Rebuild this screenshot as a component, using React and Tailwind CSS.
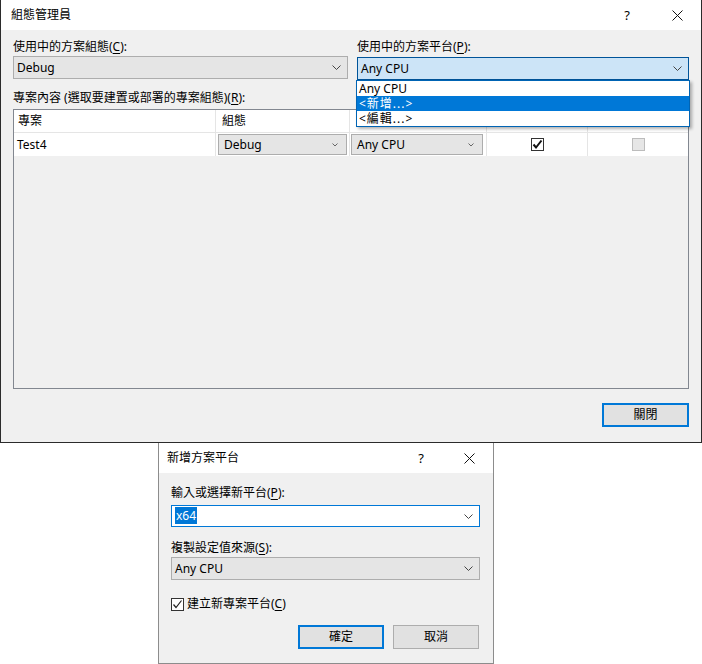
import React from 'react';

const font = "font-['Noto_Sans','Noto_Sans_CJK_TC',sans-serif]";

const Chevron = ({ className = '' }) => (
  <svg width="9" height="5" viewBox="0 0 9 5" className={className}>
    <polyline points="0.5,0.5 4.5,4.5 8.5,0.5" fill="none" stroke="#444" strokeWidth="1" />
  </svg>
);

const SmallChevron = () => (
  <svg width="6" height="4" viewBox="0 0 6 4">
    <polyline points="0.5,0.5 3,3 5.5,0.5" fill="none" stroke="#666" strokeWidth="1" />
  </svg>
);

const CloseX = () => (
  <svg width="11" height="11" viewBox="0 0 11 11">
    <path d="M0.5 0.5 L10.5 10.5 M10.5 0.5 L0.5 10.5" stroke="#111" strokeWidth="1" />
  </svg>
);

const Check = ({ bold }) => (
  <svg width="11" height="11" viewBox="0 0 11 11">
    <polyline
      points="1.5,5.5 4,8.5 9.5,1.5"
      fill="none"
      stroke={bold ? '#111' : '#222'}
      strokeWidth={bold ? '2' : '1.2'}
    />
  </svg>
);

const Key = ({ children }) => <span className="underline underline-offset-2">{children}</span>;

const TitleBar = ({ title, h, pl, qx, xx }) => (
  <div className={`${h} bg-white flex items-center ${pl} text-[12px] text-black`}>
    <span className="flex-1">{title}</span>
    <span className={`${qx} text-[13px]`}>?</span>
    <span className={`${xx} flex items-center`}>
      <CloseX />
    </span>
  </div>
);

const GrayCombo = ({ text, className = '' }) => (
  <div className={`h-[23px] bg-[#e5e5e5] border border-[#adadad] flex items-center pl-[3px] pr-[6px] ${className}`}>
    <span className="flex-1">{text}</span>
    <Chevron />
  </div>
);

export default function App() {
  return (
    <div className={`${font} text-[12px] leading-[16px] text-black bg-white w-[702px] h-[664px]`}>
      {/* 組態管理員 */}
      <div className="relative w-[702px] h-[443px] border-l border-r border-b border-[#2b2b2b] flex flex-col">
        <TitleBar title="組態管理員" h="h-[30px]" pl="pl-[10px]" qx="mr-[42px]" xx="mr-[18px]" />
        <div className="flex-1 bg-[#f0f0f0] pl-[12px] pr-[12px] pt-[9px] flex flex-col">
          <div className="flex gap-[9px]">
            <div className="w-[335px]">
              <div>使用中的方案組態(<Key>C</Key>):</div>
              <GrayCombo text="Debug" className="mt-[1px]" />
            </div>
            <div className="flex-1">
              <div>使用中的方案平台(<Key>P</Key>):</div>
              <div className="mt-[2px] h-[23px] bg-[#cce4f7] border border-[#005499] flex items-center pl-[3px] pr-[6px]">
                <span className="flex-1">Any CPU</span>
                <Chevron />
              </div>
            </div>
          </div>

          <div className="mt-[10px]">專案內容 (選取要建置或部署的專案組態)(<Key>R</Key>):</div>

          <div className="mt-[3px] h-[280px] border border-[#828790] bg-[#f0f0f0] flex flex-col">
            <div className="h-[23px] flex bg-white border-b border-[#e5e5e5]">
              <div className="w-[202px] border-r border-[#e5e5e5] pl-[4px] flex items-center">專案</div>
              <div className="w-[134px] border-r border-[#e5e5e5] pl-[6px] flex items-center">組態</div>
              <div className="w-[137px] border-r border-[#e5e5e5]" />
              <div className="w-[101px] border-r border-[#e5e5e5]" />
              <div className="flex-1" />
            </div>
            <div className="h-[23px] flex">
              <div className="w-[202px] bg-white border-r border-[#e5e5e5] pl-[3px] flex items-center">Test4</div>
              <div className="w-[134px] bg-white border-r border-[#e5e5e5] flex items-center px-[2px]">
                <div className="w-full h-[21px] bg-[#e5e5e5] border border-[#adadad] flex items-center pl-[5px] pr-[8px]">
                  <span className="flex-1">Debug</span>
                  <SmallChevron />
                </div>
              </div>
              <div className="w-[137px] bg-white border-r border-[#e5e5e5] flex items-center pl-[1px] pr-[3px]">
                <div className="w-full h-[21px] bg-[#e5e5e5] border border-[#adadad] flex items-center pl-[5px] pr-[8px]">
                  <span className="flex-1">Any CPU</span>
                  <SmallChevron />
                </div>
              </div>
              <div className="w-[101px] bg-white border-r border-[#e5e5e5] flex items-center justify-center">
                <div className="w-[13px] h-[13px] border border-[#333] bg-white flex items-center justify-center">
                  <Check bold />
                </div>
              </div>
              <div className="flex-1 bg-white flex items-center justify-center">
                <div className="w-[13px] h-[13px] border border-[#bcbcbc] bg-[#e6e6e6]" />
              </div>
            </div>
          </div>

          <div className="flex justify-end mt-[14px]">
            <button className="w-[87px] h-[24px] border-2 border-[#0078d7] bg-[#e1e1e1] text-[12px]">關閉</button>
          </div>
        </div>

        {/* 下拉清單 */}
        <div className="absolute left-[355px] top-[80px] w-[334px] h-[47px] bg-white border border-[#0064b4] shadow-[2px_2px_3px_rgba(0,0,0,0.3)] flex flex-col">
          <div className="h-[15px] leading-[15px] pl-[2px] overflow-hidden">Any CPU</div>
          <div className="h-[15px] leading-[15px] pl-[2px] overflow-hidden bg-[#0078d7] text-white tracking-[1px]">&lt;新增...&gt;</div>
          <div className="h-[15px] leading-[15px] pl-[2px] overflow-hidden tracking-[1px]">&lt;編輯...&gt;</div>
        </div>
      </div>

      {/* 新增方案平台 */}
      <div className="ml-[158px] w-[336px] h-[221px] border-l border-r border-b border-[#8c8c8c] flex flex-col">
        <TitleBar title="新增方案平台" h="h-[30px]" pl="pl-[8px]" qx="mr-[40px]" xx="mr-[18px]" />
        <div className="flex-1 bg-[#f0f0f0] pl-[12px] pr-[13px] pt-[12px] flex flex-col">
          <div>輸入或選擇新平台(<Key>P</Key>):</div>
          <div className="mt-[4px] h-[22px] bg-white border border-[#0078d7] flex items-center pl-[3px] pr-[6px]">
            <span className="flex-1">
              <span className="bg-[#0078d7] text-white px-[1px]">x64</span>
            </span>
            <Chevron />
          </div>
          <div className="mt-[13px]">複製設定值來源(<Key>S</Key>):</div>
          <GrayCombo text="Any CPU" className="mt-[1px] h-[22px]" />
          <div className="mt-[16px] flex items-center gap-[3px]">
            <div className="w-[13px] h-[13px] border border-[#333] bg-white flex items-center justify-center">
              <Check />
            </div>
            <span>建立新專案平台(<Key>C</Key>)</span>
          </div>
          <div className="mt-[13px] flex justify-end gap-[9px] pr-[1px]">
            <button className="w-[86px] h-[24px] border-2 border-[#0078d7] bg-[#e1e1e1] text-[12px]">確定</button>
            <button className="w-[86px] h-[24px] border border-[#adadad] bg-[#e1e1e1] text-[12px]">取消</button>
          </div>
        </div>
      </div>
    </div>
  );
}
